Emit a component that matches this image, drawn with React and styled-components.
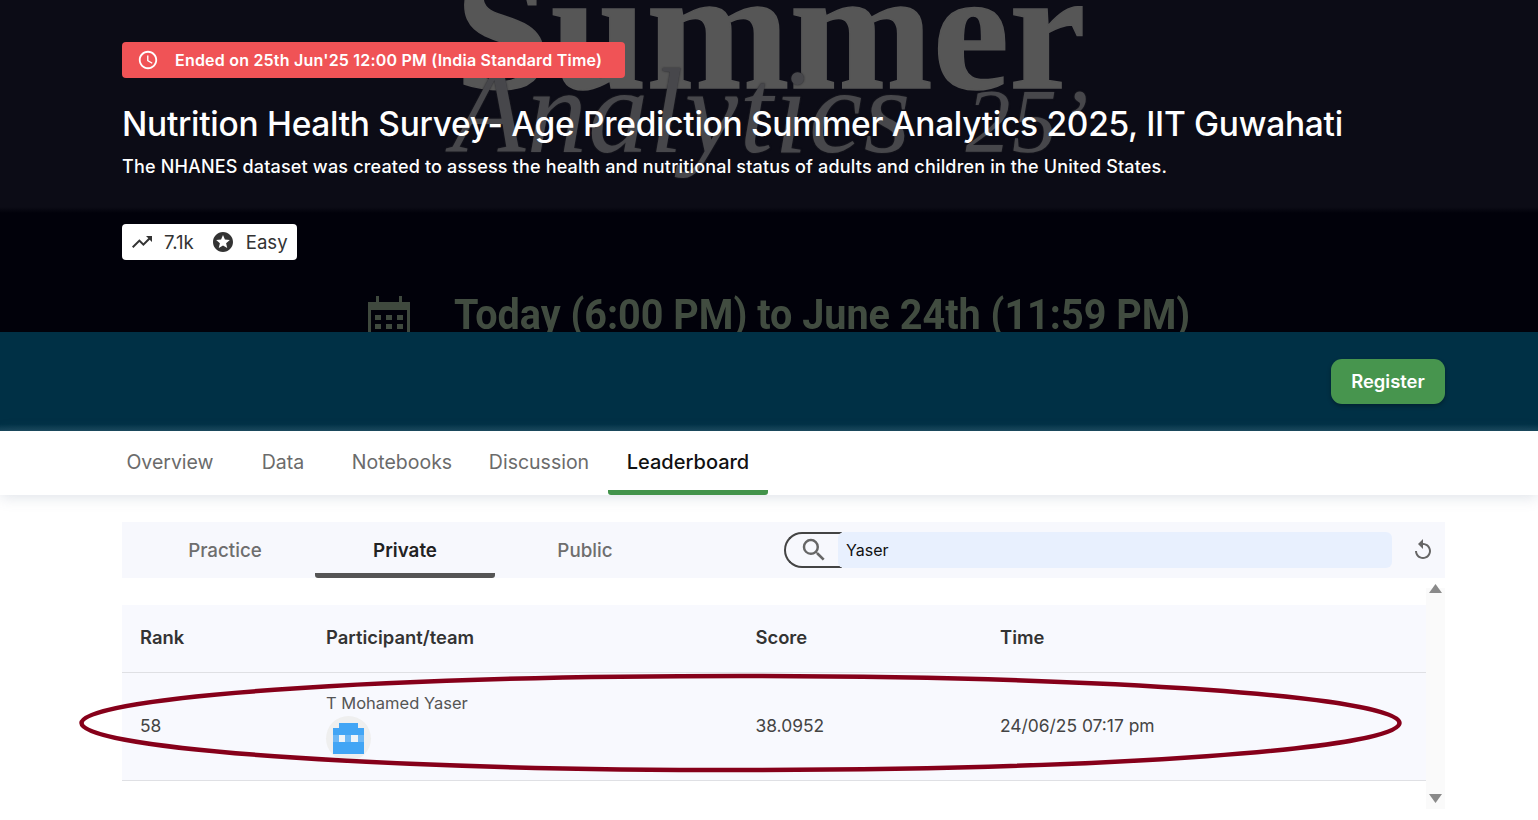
import React from "react";
import styled, { createGlobalStyle } from "styled-components";
import { MdTrendingUp, MdStars, MdAccessTime, MdReplay, MdSearch } from "react-icons/md";

const Global = createGlobalStyle`
  html, body { margin: 0; padding: 0; background: #fff; overflow: hidden; height: 820px; }
  * { box-sizing: border-box; }
  body { font-family: Inter, "Noto Sans", sans-serif; }
`;

const Page = styled.div`position: relative; width: 1538px; height: 820px; overflow: hidden; background: #fff;`;

const Hero = styled.header`
  position: relative; height: 332px; overflow: hidden;
  background: linear-gradient(#0c0c16 0, #0c0c16 207px, #01010a 213px, #01010a 100%);
  padding: 42px 122px 0;
`;
const Art = styled.div`position: absolute; inset: 0; overflow: hidden; pointer-events: none; filter: blur(0.7px);`;
const ArtSummer = styled.div`
  position: absolute; left: 455px; top: -65px;
  font: 700 172px/190px "Liberation Serif", serif; color: #565656; white-space: nowrap;
  -webkit-text-stroke: 1.5px #565656;
`;
const ArtAnalytics = styled.div`
  position: absolute; left: 452px; top: 47px;
  font: italic 400 120px/130px "Liberation Serif", serif; color: #47474b; letter-spacing: 1.5px; white-space: nowrap;
  text-shadow: 0 0 2px #26262a;
`;
const ArtYear = styled.span`margin-left: 22px; font-size: 90px;`;
const ArtDate = styled.div`
  position: absolute; left: 454px; top: 287px; transform: scaleX(0.92); transform-origin: left center;
  font: 700 43px/54px Roboto, sans-serif; color: #414c40; white-space: nowrap;
`;
const ArtCal = styled.svg`position: absolute; left: 366px; top: 296px;`;
const HeroContent = styled.div`position: relative; display: flex; flex-direction: column; align-items: flex-start;`;
const Ended = styled.div`
  display: flex; align-items: center; height: 36px; width: 503px; padding-left: 15px; border-radius: 4px;
  background: #f05356; color: #fff; font-size: 16px; font-weight: 600; letter-spacing: 0.21px; white-space: nowrap;
  svg { margin-right: 16px; flex: none; }
`;
const Title = styled.h1`
  margin: 25px 0 0; font-size: 33.5px; line-height: 42px; font-weight: 500; color: #fff; letter-spacing: -0.29px; white-space: nowrap;
`;
const Sub = styled.p`
  margin: 10px 0 0; font-size: 18px; line-height: 24px; font-weight: 500; color: #fff; letter-spacing: 0.17px; white-space: nowrap;
`;
const Chips = styled.div`
  display: flex; align-items: center; margin-top: 45px; height: 36px; width: 175px; padding-left: 8px; border-radius: 4px;
  background: #fff; color: #333; font-size: 18.6px; white-space: nowrap;
`;
const ChipText = styled.span`margin: 0 ${p => p.$after}px 0 ${p => p.$gap}px;`;

const Bar = styled.div`
  height: 99px; display: flex; align-items: center; justify-content: flex-end; padding: 0 93px 0 0;
  background: linear-gradient(#003045 0, #003045 92px, #17465a 99px);
`;
const Register = styled.button`
  width: 114px; height: 45px; margin-top: -1px; border: 0; border-radius: 11px; background: #47954e; color: #fff;
  font: 600 18.4px Inter, sans-serif; box-shadow: 0 2px 4px rgba(0,0,0,.3);
`;
const Tabs = styled.nav`
  position: relative; height: 64px; display: flex; padding-left: 108px; background: #fff;
  box-shadow: 0 2px 14px rgba(90,110,140,.2);
`;
const Tab = styled.div`
  position: relative; display: flex; align-items: center; justify-content: center; width: ${p => p.$w}px; height: 64px; padding-top: 3px;
  font-size: ${p => p.$on ? 20 : 19.5}px; font-weight: ${p => p.$on ? 500 : 400}; color: ${p => p.$on ? "#111" : "#6b6b6b"};
  border-bottom: 5px solid ${p => p.$on ? "#43934b" : "transparent"};
  border-radius: 0 0 3px 3px; white-space: nowrap;
`;
const Main = styled.main`padding: 27px 93px 0 122px;`;
const Sort = styled.div`
  height: 56px; display: flex; align-items: center; padding-left: 13px; background: #f7f8fd;
`;
const SortTab = styled.div`
  width: 180px; height: 56px; display: flex; align-items: center; justify-content: center; padding-top: 6px;
  font-size: 18.8px; font-weight: ${p => p.$on ? 600 : 500}; color: ${p => p.$on ? "#222" : "#6e6e6e"};
  border-bottom: 5px solid ${p => p.$on ? "#555" : "transparent"}; border-radius: 0 0 3px 3px;
`;
const Search = styled.div`
  margin-left: 109px; width: 608px; height: 36px; display: flex; align-items: stretch;
`;
const SearchIcon = styled.div`
  width: 58px; margin-right: -2px; display: flex; align-items: center; justify-content: center;
  border: 2px solid #444; border-right: 0; border-radius: 18px 0 0 18px; color: #666;
`;
const SearchInput = styled.div`
  flex: 1; display: flex; align-items: center; background: #e8f0fe; border-radius: 6px;
  margin-left: -2px; padding-left: 8px;
  font: 400 16px Inter, sans-serif; color: #111;
`;
const Refresh = styled.div`margin-left: 19px; display: flex; color: #666;`;

const TableWrap = styled.div`display: flex; margin-top: 0; height: 231px;`;
const Table = styled.div`flex: 1; padding-top: 27px;`;
const Row = styled.div`
  display: grid; grid-template-columns: 186px 429.5px 244.5px 1fr; align-items: center; padding-left: 18px;
  height: ${p => p.$h}px; background: #f8f9fe; border-bottom: 1px solid #dfe0e4;
`;
const Head = styled.div`font-size: 18.4px; font-weight: 600; color: #333; margin-top: -4px;`;
const Cell = styled.div`font-size: 17.4px; color: #444; margin-top: -2px;`;
const Name = styled.div`font-size: 16.5px; line-height: 22px; color: #555; margin-top: -15px;`;
const Avatar = styled.div`
  width: 45px; height: 45px; margin-top: 2px; margin-bottom: -15px; border-radius: 50%; background: #efefef; display: flex; align-items: center; justify-content: center;
`;
const Scroll = styled.div`
  width: 19px; height: 231px; background: linear-gradient(#fff 0, #fff 10px, #fafafa 10px); display: flex; flex-direction: column; align-items: center; justify-content: space-between; padding: 6px 0 6px;
`;
const Ring = styled.svg`position: absolute; left: 0; top: 0; pointer-events: none;`;

export default function App() {
  return (
    <Page>
      <Global />
      <Hero>
        <Art>
          <ArtSummer>Summer</ArtSummer>
          <ArtAnalytics>Analytics <ArtYear>25’</ArtYear></ArtAnalytics>
          <ArtCal width="46" height="40" viewBox="0 0 46 40" fill="#3f493e">
            <path d="M2 6h42v34H2z M5 14v23h36V14z" fillRule="evenodd" />
            <path d="M10 0h3v8h-3zM33 0h3v8h-3zM9 19h6v5H9zM20 19h6v5h-6zM31 19h6v5h-6zM9 28h6v5H9zM20 28h6v5h-6zM31 28h6v5h-6z" />
          </ArtCal>
          <ArtDate>Today (6:00 PM) to June 24th (11:59 PM)</ArtDate>
        </Art>
        <HeroContent>
          <Ended><MdAccessTime size={22} />Ended on 25th Jun'25 12:00 PM (India Standard Time)</Ended>
          <Title>Nutrition Health Survey- Age Prediction Summer Analytics 2025, IIT Guwahati</Title>
          <Sub>The NHANES dataset was created to assess the health and nutritional status of adults and children in the United States.</Sub>
          <Chips>
            <MdTrendingUp size={24} />
            <ChipText $gap={10} $after={17}>7.1k</ChipText>
            <MdStars size={24} />
            <ChipText $gap={11} $after={0}>Easy</ChipText>
          </Chips>
        </HeroContent>
      </Hero>
      <Bar><Register>Register</Register></Bar>
      <Tabs>
        <Tab $w={124}>Overview</Tab>
        <Tab $w={102}>Data</Tab>
        <Tab $w={136}>Notebooks</Tab>
        <Tab $w={138}>Discussion</Tab>
        <Tab $w={160} $on>Leaderboard</Tab>
      </Tabs>
      <Main>
        <Sort>
          <SortTab>Practice</SortTab>
          <SortTab $on>Private</SortTab>
          <SortTab>Public</SortTab>
          <Search>
            <SearchIcon><MdSearch size={30} /></SearchIcon>
            <SearchInput>Yaser</SearchInput>
          </Search>
          <Refresh><MdReplay size={24} /></Refresh>
        </Sort>
        <TableWrap>
          <Table>
            <Row $h={68}>
              <Head>Rank</Head><Head>Participant/team</Head><Head>Score</Head><Head>Time</Head>
            </Row>
            <Row $h={108}>
              <Cell>58</Cell>
              <div>
                <Name>T Mohamed Yaser</Name>
                <Avatar>
                  <svg width="31" height="31" viewBox="0 0 31 31">
                    <path fill="#42a5f5" d="M6 0h19v5h6v26H0V5h6z" />
                    <path fill="#6db8f6" d="M0 12h31v7H0z" />
                    <path fill="#eef3f8" d="M6 12h6v7H6zM18 12h7v7h-7z" />
                  </svg>
                </Avatar>
              </div>
              <Cell>38.0952</Cell>
              <Cell>24/06/25 07:17 pm</Cell>
            </Row>
          </Table>
          <Scroll>
            <svg width="13" height="9" viewBox="0 0 13 9"><path fill="#8a8a8a" d="M6.5 0L13 9H0z" /></svg>
            <svg width="13" height="9" viewBox="0 0 13 9"><path fill="#8a8a8a" d="M6.5 9L13 0H0z" /></svg>
          </Scroll>
        </TableWrap>
      </Main>
      <Ring width="1538" height="820" viewBox="0 0 1538 820">
        <ellipse cx="740.5" cy="723" rx="659" ry="47" fill="none" stroke="#86001a" strokeWidth="4.5" />
      </Ring>
    </Page>
  );
}
